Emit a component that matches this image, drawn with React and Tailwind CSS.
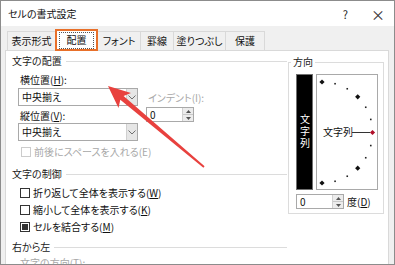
import React from "react";

function Heading({ children, className = "" }) {
  return (
    <div className={"flex items-center h-[12px] " + className}>
      <span className="text-[#222] whitespace-nowrap">{children}</span>
      <div className="flex-1 h-px bg-[#dcdcdc] ml-[4px]" />
    </div>
  );
}

function Chevron() {
  return (
    <svg width="8" height="5" viewBox="0 0 8 5">
      <path d="M0.5 0.5 L4 4 L7.5 0.5" fill="none" stroke="#707070" strokeWidth="1" />
    </svg>
  );
}

function Select({ value }) {
  return (
    <div className="flex w-[120px] h-[18px] border border-[#a9a9a9] bg-white">
      <div className="flex-1 flex items-center pl-[3px] text-[#111]">{value}</div>
      <div className="w-[11px] bg-[#e6e6e6] border-l border-[#d0d0d0] flex items-center justify-center">
        <Chevron />
      </div>
    </div>
  );
}

function Spin({ value, w }) {
  return (
    <div className={"flex h-[15px] border border-[#a9a9a9] bg-white " + w}>
      <div className="flex-1 flex items-center pl-[3px] text-[#111]">{value}</div>
      <div className="w-[11px] bg-[#ececec] border-l border-[#d0d0d0] flex flex-col">
        <div className="flex-1 flex items-center justify-center border-b border-[#c8c8c8]">
          <svg width="5" height="3" viewBox="0 0 5 3"><path d="M0 3 L2.5 0 L5 3 Z" fill="#555" /></svg>
        </div>
        <div className="flex-1 flex items-center justify-center">
          <svg width="5" height="3" viewBox="0 0 5 3"><path d="M0 0 L2.5 3 L5 0 Z" fill="#555" /></svg>
        </div>
      </div>
    </div>
  );
}

function Check({ children, state = "off", disabled = false, className = "" }) {
  return (
    <div className={"flex items-center h-[17px] " + className}>
      <div
        className={
          "w-[10px] h-[10px] border bg-white flex items-center justify-center " +
          (disabled ? "border-[#cccccc]" : "border-[#333333]")
        }
      >
        {state === "mixed" && <div className="w-[6px] h-[6px] bg-[#333]" />}
      </div>
      <span className={"ml-[3px] whitespace-nowrap " + (disabled ? "text-[#a8a8a8]" : "text-[#111]")}>
        {children}
      </span>
    </div>
  );
}

function Dial() {
  const cx = 5;
  const cy = 57.5;
  const r = 50.5;
  const dots = [];
  for (let a = 90; a >= -90; a -= 15) {
    const rad = (a * Math.PI) / 180;
    const x = cx + r * Math.cos(rad);
    const y = cy - r * Math.sin(rad);
    const big = a % 45 === 0;
    dots.push({ a, x, y, big });
  }
  return (
    <svg width="60" height="114" viewBox="0 0 60 114">
      {dots.map((d) =>
        d.big ? (
          <path
            key={d.a}
            d={`M${d.x} ${d.y - 2.6} L${d.x + 2.6} ${d.y} L${d.x} ${d.y + 2.6} L${d.x - 2.6} ${d.y} Z`}
            fill={d.a === 0 ? "#b0102a" : "#111"}
          />
        ) : (
          <rect key={d.a} x={d.x - 0.8} y={d.y - 0.8} width="1.6" height="1.6" fill="#222" />
        )
      )}
      <text x="6" y="61" fontSize="10" fill="#111" style={{ fontFeatureSettings: "'palt'" }}>
        文字列
      </text>
      <line x1="35" y1="57.5" x2="53" y2="57.5" stroke="#333" strokeWidth="1" />
    </svg>
  );
}

export default function App() {
  return (
    <div className="relative w-[395px] h-[265px] overflow-hidden bg-[#f0f0f0] border border-[#8c8c8c] font-['Noto_Sans_CJK_JP','Noto_Sans',sans-serif] text-[10px] leading-[12px] [font-feature-settings:'palt'] text-[#111]">
      {/* title bar */}
      <div className="h-[25px] bg-white flex items-center pl-[7px]">
        <span className="text-[#111]">セルの書式設定</span>
        <span className="ml-auto text-[11px] text-[#222]">?</span>
        <span className="ml-[23px] mr-[9px] text-[14px] text-[#333]">×</span>
      </div>

      {/* tabs */}
      <div className="h-[24px] flex items-end pl-[6px]">
        <div className="w-[48px] h-[19px] border-t border-l border-[#d9d9d9] flex items-center justify-center">表示形式</div>
        <div className="relative z-10 w-[43px] h-[22px] -mb-px bg-white border-2 border-[#e8702a] flex items-center justify-center">
          <div className="w-[35px] h-[17px] border border-dotted border-[#555] flex items-center justify-center">配置</div>
        </div>
        <div className="w-[42px] h-[19px] border-t border-[#d9d9d9] flex items-center justify-center">フォント</div>
        <div className="w-[33px] h-[19px] border-t border-l border-[#d9d9d9] flex items-center justify-center">罫線</div>
        <div className="w-[52px] h-[19px] border-t border-l border-[#d9d9d9] flex items-center justify-center">塗りつぶし</div>
        <div className="w-[40px] h-[19px] border-t border-l border-r border-[#d9d9d9] flex items-center justify-center">保護</div>
      </div>

      {/* panel */}
      <div className="ml-[4px] w-[384px] h-[240px] border border-[#d9d9d9] bg-white flex">
        {/* left column */}
        <div className="w-[282px] pl-[6px] pr-[1px] flex flex-col">
          <Heading className="mt-[4px]">文字の配置</Heading>
          <div className="flex">
            <div className="flex flex-col">
              <div className="mt-[7px] pl-[8px] h-[12px]">
                横位置(<span className="underline">H</span>):
              </div>
              <div className="mt-[2px] ml-[6px]">
                <Select value="中央揃え" />
              </div>
              <div className="mt-[4px] pl-[8px] h-[12px]">
                縦位置(<span className="underline">V</span>):
              </div>
              <div className="mt-[1px] ml-[6px]">
                <Select value="中央揃え" />
              </div>
            </div>
            <div className="flex flex-col ml-[8px] mt-[25px]">
              <div className="h-[12px] pl-[2px] text-[#a8a8a8]">インデント(I):</div>
              <div className="mt-[3px]">
                <Spin value="0" w="w-[48px]" />
              </div>
            </div>
          </div>
          <Check disabled className="mt-[2px] pl-[9px]">前後にスペースを入れる(E)</Check>
          <Heading className="mt-[8px]">文字の制御</Heading>
          <Check className="mt-[4px] pl-[8px]">
            折り返して全体を表示する(<span className="underline">W</span>)
          </Check>
          <Check className="pl-[8px]">
            縮小して全体を表示する(<span className="underline">K</span>)
          </Check>
          <Check state="mixed" className="pl-[8px]">
            セルを結合する(<span className="underline">M</span>)
          </Check>
          <Heading className="mt-[6px]">右から左</Heading>
          <div className="mt-[4px] pl-[8px] h-[12px] text-[#a8a8a8]">文字の方向(T):</div>
        </div>

        {/* orientation group */}
        <fieldset className="mt-[5px] w-[96px] h-[158px] border border-[#dcdcdc] pl-[7px] pr-0 m-0 min-w-0">
          <legend className="-ml-[5px] px-[2px] h-[12px] text-[#222]">方向</legend>
          <div className="mt-[6px] flex">
            <div className="w-[17px] h-[116px] bg-black border border-[#707070] flex items-center justify-center text-white">
              <span className="[writing-mode:vertical-rl] tracking-[2px] leading-[12px]">文字列</span>
            </div>
            <div className="ml-[3px] w-[62px] h-[116px] border border-[#a9a9a9] bg-white">
              <Dial />
            </div>
          </div>
          <div className="mt-[4px] flex items-center">
            <Spin value="0" w="w-[48px]" />
            <span className="ml-[3px]">
              度(<span className="underline">D</span>)
            </span>
          </div>
        </fieldset>
      </div>

      {/* annotation arrow */}
      <svg className="absolute left-0 top-0 pointer-events-none" width="395" height="265" viewBox="0 0 395 265">
        <polygon
          points="107,85 130,92 122.6,95 203.6,165.2 202.4,166.8 119.3,98.8 117.5,107"
          fill="#e8413e"
        />
      </svg>
    </div>
  );
}
